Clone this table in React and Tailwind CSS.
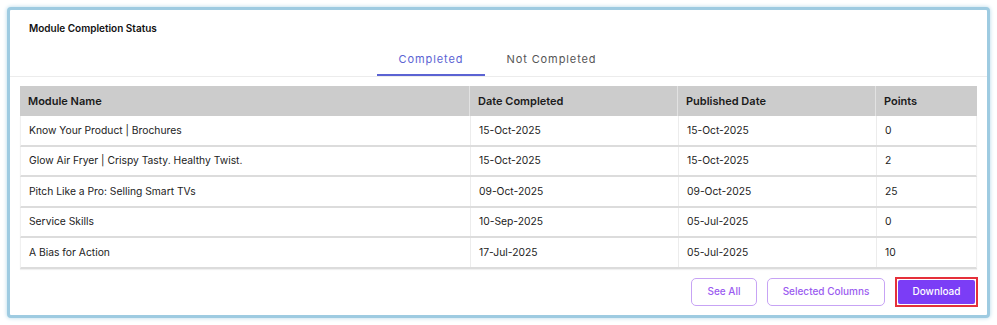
import React from 'react';

const ROWS = [
  { name: 'Know Your Product | Brochures', done: '15-Oct-2025', published: '15-Oct-2025', points: '0' },
  { name: 'Glow Air Fryer | Crispy Tasty. Healthy Twist.', done: '15-Oct-2025', published: '15-Oct-2025', points: '2' },
  { name: 'Pitch Like a Pro: Selling Smart TVs', done: '09-Oct-2025', published: '09-Oct-2025', points: '25' },
  { name: 'Service Skills', done: '10-Sep-2025', published: '05-Jul-2025', points: '0' },
  { name: 'A Bias for Action', done: '17-Jul-2025', published: '05-Jul-2025', points: '10' },
];

const COLS = 'grid grid-cols-[449px_208px_198px_101px]';

export default function App() {
  return (
    <div className="w-[997px] h-[325px] bg-white p-[7px] font-['Inter',sans-serif]">
      <div className="h-[311px] rounded-[4px] border-[3px] border-[#9ecbe1] shadow-[0_0_4px_#b3d7e8] bg-white flex flex-col">
        <div className="pl-[19px] pt-[11px] text-[10px] font-semibold text-[#111]">Module Completion Status</div>

        <div className="mt-[15px] border-b border-[#ececec] flex justify-center">
          <div className="flex -ml-[2px]">
            <div className="w-[108px] h-[25px] flex items-start justify-center border-b-2 border-[#5b63d3] text-[11px] tracking-[0.9px] text-[#5b63d3]">
              Completed
            </div>
            <div className="w-[133px] h-[25px] flex items-start justify-center text-[11px] tracking-[0.9px] text-[#555]">
              Not Completed
            </div>
          </div>
        </div>

        <div className="mx-[10px] mt-[9px] text-[10.3px] text-[#222]">
          <div className={`${COLS} h-[30px] bg-[#cccccc] font-semibold text-[11px] text-[#1a1a1a]`}>
            <div className="px-[8px] flex items-center">Module Name</div>
            <div className="px-[8px] flex items-center border-l border-[#e2e2e2]">Date Completed</div>
            <div className="px-[8px] flex items-center border-l border-[#e2e2e2]">Published Date</div>
            <div className="px-[8px] flex items-center border-l border-[#e2e2e2]">Points</div>
          </div>
          {ROWS.map((r) => (
            <div key={r.name} className={`${COLS} h-[30.5px] bg-white border-b-[2px] border-[#dcdcdc] shadow-[0_1px_1px_rgba(0,0,0,0.06)] border-x border-x-[#f0f0f0]`}>
              <div className="px-[8px] flex items-center">{r.name}</div>
              <div className="px-[8px] flex items-center border-l border-[#ececec]">{r.done}</div>
              <div className="px-[8px] flex items-center border-l border-[#ececec]">{r.published}</div>
              <div className="px-[8px] flex items-center border-l border-[#ececec]">{r.points}</div>
            </div>
          ))}
        </div>

        <div className="flex justify-end gap-[10px] pr-[9px] mt-[9px] text-[10px] font-medium">
          <div className="w-[66px] h-[28px] rounded-[5px] border border-[#c7a3f5] text-[#9b5cf0] flex items-center justify-center">See All</div>
          <div className="w-[118px] h-[28px] rounded-[5px] border border-[#c7a3f5] text-[#9b5cf0] flex items-center justify-center">Selected Columns</div>
          <div className="w-[83px] h-[30px] -mt-[1px] border-2 border-[#e5303a] p-[1px] flex">
            <div className="flex-1 rounded-[2px] bg-[#7b3df6] text-white flex items-center justify-center">Download</div>
          </div>
        </div>
      </div>
    </div>
  );
}
